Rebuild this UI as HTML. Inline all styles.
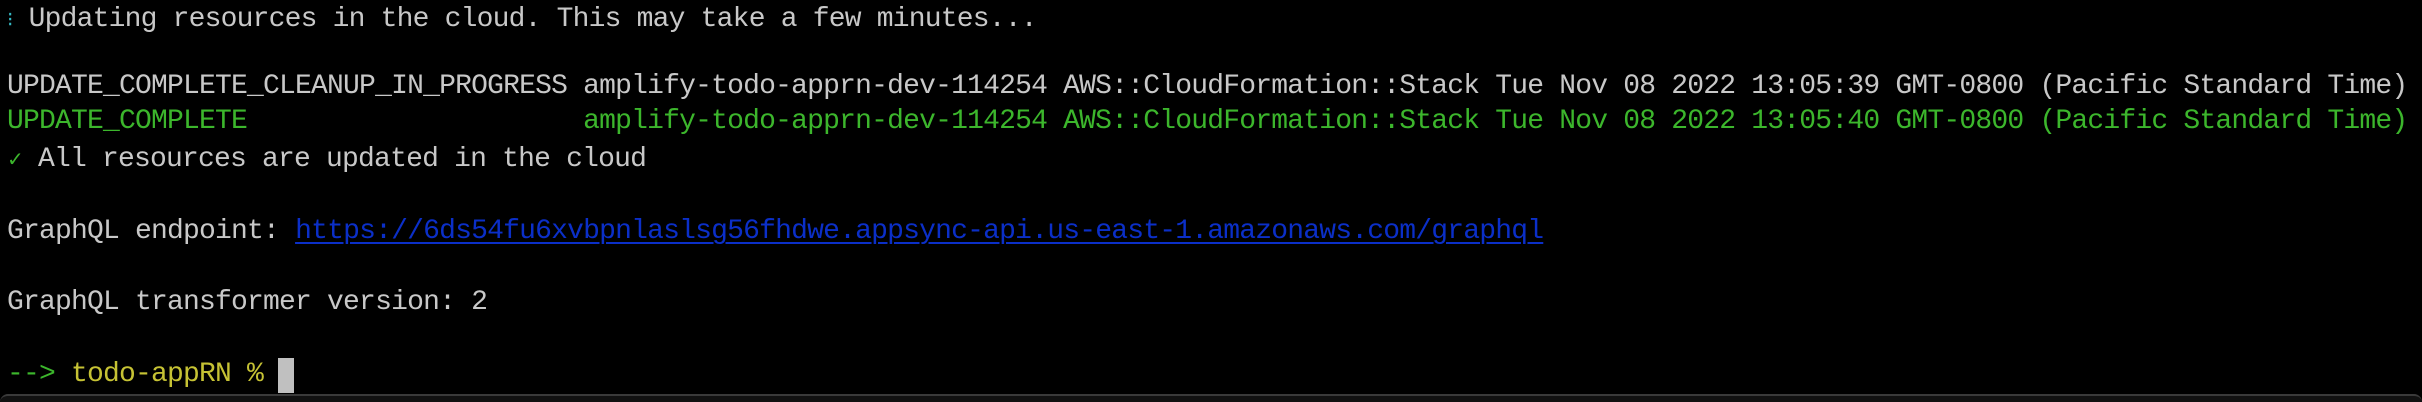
<!DOCTYPE html>
<html><head><style>
html,body{margin:0;padding:0;background:#000;width:2422px;height:400px;overflow:hidden}
.l{position:absolute;left:7px;white-space:pre;font-family:"Liberation Mono",monospace;font-size:28px;letter-spacing:-0.8px;color:#c8c8c8;line-height:36px;height:36px}
.g{color:#3cb62c}.b{color:#0b2fc8;text-decoration:underline;text-decoration-thickness:2px;text-underline-offset:4px}
.y{color:#c6c234}.c{color:#35b8c4;font-size:20px}
.ck{color:#3cb62c;font-family:"DejaVu Sans",sans-serif;font-size:20px;display:inline-block;width:15px}
.cur{position:absolute;left:278px;top:358px;width:16px;height:35px;background:#c0c0c0}
.bot{position:absolute;left:0;top:394px;width:2422px;height:6px;border-top:2px solid #3a3a3a;background:#111;border-radius:10px 10px 0 0}
</style></head><body>
<div class="l" style="top:2px"><span class="c">⁝</span> Updating resources in the cloud. This may take a few minutes...</div>
<div class="l" style="top:69px">UPDATE_COMPLETE_CLEANUP_IN_PROGRESS amplify-todo-apprn-dev-114254 AWS::CloudFormation::Stack Tue Nov 08 2022 13:05:39 GMT-0800 (Pacific Standard Time)</div>
<div class="l g" style="top:104px">UPDATE_COMPLETE                     amplify-todo-apprn-dev-114254 AWS::CloudFormation::Stack Tue Nov 08 2022 13:05:40 GMT-0800 (Pacific Standard Time)</div>
<div class="l" style="top:141px"><span class="ck">✓</span> All resources are updated in the cloud</div>
<div class="l" style="top:214px">GraphQL endpoint: <span class="b">https://6ds54fu6xvbpnlaslsg56fhdwe.appsync-api.us-east-1.amazonaws.com/graphql</span></div>
<div class="l" style="top:285px">GraphQL transformer version: 2</div>
<div class="l" style="top:357px"><span class="g">--&gt;</span> <span class="y">todo-appRN %</span></div>
<div class="cur"></div>
<div class="bot"></div>
</body></html>
